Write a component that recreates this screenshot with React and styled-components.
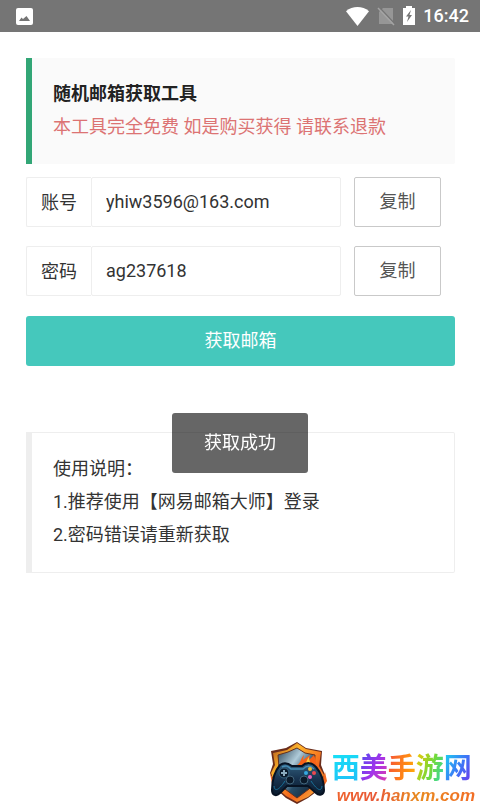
import React, { useState } from "react";
import styled, { createGlobalStyle } from "styled-components";

const GlobalStyle = createGlobalStyle`
  * { box-sizing: border-box; }
  body {
    margin: 0;
    background: #fff;
    color: #333;
    font: 18px/33px Roboto, "Noto Sans CJK SC", sans-serif;
  }
  button, input { font: inherit; }
`;

const Page = styled.div`
  position: relative;
  min-height: 100vh;
  display: flex;
  flex-direction: column;
`;

const StatusBar = styled.header`
  height: 32px;
  padding: 0 11px 0 16px;
  display: flex;
  align-items: center;
  justify-content: space-between;
  background: #757575;
  color: #fff;
`;

const StatusIcons = styled.div`
  display: flex;
  align-items: center;
  gap: 8px;
`;

const Clock = styled.time`
  font-weight: 500;
  line-height: 32px;
`;

const Content = styled.main`
  flex: 1;
  padding: 26px 25px 0 26px;
`;

const Intro = styled.section`
  margin-bottom: 13px;
  padding: 19px 20px 21px 21px;
  border-left: 6px solid #32a676;
  border-radius: 0 2px 2px 0;
  background: #fafafa;
`;

const Title = styled.h1`
  margin: 0;
  color: #222;
  font-size: 18px;
  font-weight: 700;
`;

const Warning = styled.p`
  margin: 0;
  color: #dc7373;
`;

const Form = styled.form`
  display: flex;
  flex-direction: column;
  gap: 20px;
`;

const FieldRow = styled.div`
  display: flex;
  height: 50px;
  padding-right: 14px;
`;

const Fields = styled.div`
  display: flex;
  flex-direction: column;
  gap: 19px;
`;

const FieldLabel = styled.label`
  width: 65px;
  display: flex;
  align-items: center;
  justify-content: center;
  border: 1px solid #eee;
  border-right: 0;
  border-radius: 2px 0 0 2px;
`;

const FieldInput = styled.input`
  flex: 1;
  min-width: 0;
  margin-right: 13px;
  padding: 0 14px 2px;
  border: 1px solid #eee;
  border-radius: 2px;
  background: #fff;
  color: #333;
  outline: 0;
`;

const CopyButton = styled.button`
  width: 87px;
  padding: 0 0 2px;
  border: 1px solid #c9c9c9;
  border-radius: 2px;
  background: #fff;
  color: #555;
`;

const SubmitButton = styled.button`
  height: 50px;
  padding: 0 0 2px;
  border: 0;
  border-radius: 3px;
  background: #45c8bc;
  color: #fff;
`;

const Notes = styled.section`
  margin-top: 66px;
  padding: 19px 20px 21px 21px;
  border: 1px solid #eee;
  border-left: 6px solid #eee;
  border-radius: 0 2px 2px 0;
`;

const NoteLine = styled.p`
  margin: 0;
`;

const Toast = styled.div`
  position: fixed;
  top: 413px;
  left: 50%;
  transform: translateX(-50%);
  width: 136px;
  height: 60px;
  border-radius: 3px;
  background: rgba(0, 0, 0, 0.6);
  color: #fff;
  line-height: 60px;
  text-align: center;
`;

const Watermark = styled.a`
  position: fixed;
  right: 5px;
  bottom: 0;
  display: flex;
  align-items: flex-end;
  gap: 5px;
  text-decoration: none;
`;

const Brand = styled.span`
  display: flex;
  flex-direction: column;
`;

const BrandName = styled.span`
  display: flex;
  font-size: 28px;
  font-weight: 700;
  line-height: 38px;
`;

const Glyph = styled.span`
  background: ${(p) => p.$fill};
  background-clip: text;
  -webkit-background-clip: text;
  color: transparent;
`;

const BrandUrl = styled.span`
  padding-left: 5px;
  font: italic 700 17px/16px "Liberation Sans", sans-serif;
  background: linear-gradient(90deg, #f0642c, #e85a38 30%, #e88a20 60%, #f26d25);
  background-clip: text;
  -webkit-background-clip: text;
  color: transparent;
`;

const brandGlyphs = [
  ["西", "linear-gradient(160deg, #15e4f6, #22b8f8)"],
  ["美", "linear-gradient(120deg, #4b4cf0, #a134ea 50%, #ee3fa0)"],
  ["手", "linear-gradient(100deg, #f4503c, #ff8a12 60%, #ffb60a)"],
  ["游", "linear-gradient(110deg, #ffc400, #75d935 50%, #21d7c3)"],
  ["网", "linear-gradient(120deg, #18dcf0, #3b79f7 50%, #7a2ae8)"],
];

const PictureIcon = () => (
  <svg width="17" height="17" viewBox="0 0 17 17" aria-hidden="true">
    <rect width="17" height="17" rx="2" fill="#fff" />
    <path d="M3 13l2.500-3.500 1.500 1.500L10.500 8l3.500 5z" fill="#757575" />
  </svg>
);

const WifiIcon = () => (
  <svg width="23" height="19" viewBox="0 0 23 19" aria-hidden="true">
    <path d="M0 4.2C6.5-1.3 16.5-1.3 23 4.2L11.5 19z" fill="#fff" />
  </svg>
);

const NoSimIcon = () => (
  <svg width="18" height="19" viewBox="0 0 18 19" aria-hidden="true">
    <path d="M6 1h10v16H2V5z" fill="#969696" />
    <path d="M2 0l16 17" stroke="#757575" strokeWidth="1.5" />
    <path d="M1 1l16 17" stroke="#a4a4a4" strokeWidth="1.5" />
  </svg>
);

const BatteryIcon = () => (
  <svg width="12" height="20" viewBox="0 0 12 20" aria-hidden="true">
    <path d="M3 0h6v2h3v17H0V2h3z" fill="#fff" />
    <path d="M8 4L3 10.500h2.500L4 16l5-7H6.500z" fill="#757575" />
  </svg>
);

const GamepadShield = () => (
  <svg width="58" height="63" viewBox="0 0 58 63" aria-hidden="true">
    <defs>
      <linearGradient id="rim" x1="0" y1="0" x2="1" y2="1">
        <stop offset="0" stopColor="#a84c18" />
        <stop offset=".3" stopColor="#ffb52c" />
        <stop offset=".65" stopColor="#f3621b" />
        <stop offset="1" stopColor="#ffd34b" />
      </linearGradient>
      <linearGradient id="steel" x1="0" y1="0" x2="1" y2="1">
        <stop offset="0" stopColor="#284153" />
        <stop offset=".35" stopColor="#afcbd9" />
        <stop offset=".6" stopColor="#284d67" />
        <stop offset="1" stopColor="#111c2d" />
      </linearGradient>
      <linearGradient id="pad" x1="0" y1="0" x2="0" y2="1">
        <stop offset="0" stopColor="#315f7d" />
        <stop offset=".5" stopColor="#18334f" />
        <stop offset="1" stopColor="#091a2c" />
      </linearGradient>
    </defs>
    <path d="M28 1l9 6 16 3-1 14 4 10-5 14-12 9-11 6-11-6-10-9-6-16 3-9-2-13 15-3z" fill="#6a2c1b" />
    <path d="M28 2l9 6 15 3-2 14 5 9-5 13-11 9-11 5-11-6-9-8-6-15 4-8-2-12 14-3z" fill="url(#rim)" />
    <path d="M28 7l8 5 10 2-2 25-4 9-12 9-12-9-5-9-2-25 10-3z" fill="url(#steel)" stroke="#63301f" />
    <path d="M25 25c7-1 6-7 10-11l-1 5 7-5-1 5 5-5c3 7 1 11 5 16l-4 5H30z" fill="#f66218" />
    <path d="M32 25c6-1 5-6 8-9 0 7 4 6 4 12H34z" fill="#ffc842" />
    <path d="M1 32l4 8-1 8zM56 31l-3 9 2 5 3-5z" fill="#f36a20" />
    <path d="M11 24c4-3 8-2 12 1h10c4-4 10-4 14 1 6 7 8 16 8 23 0 5-5 6-8 3l-8-7H18l-7 7c-4 4-8 2-8-3 0-9 2-18 8-25z" fill="url(#pad)" stroke="#071323" strokeWidth="2" />
    <path d="M13 26c4-2 6-1 9 2h12c4-4 8-3 11 0" fill="none" stroke="#478fb7" strokeWidth="1.500" />
    <path d="M5 45c1 8 7 1 11-5M53 45c-1 8-7 1-11-5" fill="none" stroke="#19739c" />
    <circle cx="15" cy="32" r="5" fill="#0b1a2a" stroke="#36627e" />
    <path d="M15 29v6M12 32h6" stroke="#8cabbd" strokeWidth="2" />
    <circle cx="21" cy="39" r="4" fill="#0b1a2a" stroke="#42657b" />
    <circle cx="35" cy="39" r="4" fill="#0b1a2a" stroke="#42657b" />
    <circle cx="41" cy="28" r="2" fill="#f3be37" />
    <circle cx="37" cy="32" r="2" fill="#34a8e0" />
    <circle cx="45" cy="32" r="2" fill="#ed4950" />
    <circle cx="41" cy="36" r="2" fill="#eb5fb6" />
  </svg>
);

function CopyField({ id, label, value }) {
  const [text, setText] = useState(value);
  return (
    <FieldRow>
      <FieldLabel htmlFor={id}>{label}</FieldLabel>
      <FieldInput id={id} value={text} onChange={(e) => setText(e.target.value)} />
      <CopyButton type="button" onClick={() => navigator.clipboard?.writeText(text)}>
        复制
      </CopyButton>
    </FieldRow>
  );
}

export default function App() {
  return (
    <Page lang="zh-CN">
      <GlobalStyle />
      <StatusBar>
        <PictureIcon />
        <StatusIcons>
          <WifiIcon />
          <NoSimIcon />
          <BatteryIcon />
          <Clock>16:42</Clock>
        </StatusIcons>
      </StatusBar>
      <Content>
        <Intro>
          <Title>随机邮箱获取工具</Title>
          <Warning>本工具完全免费 如是购买获得 请联系退款</Warning>
        </Intro>
        <Form onSubmit={(e) => e.preventDefault()}>
          <Fields>
            <CopyField id="account" label="账号" value="yhiw3596@163.com" />
            <CopyField id="password" label="密码" value="ag237618" />
          </Fields>
          <SubmitButton type="submit">获取邮箱</SubmitButton>
        </Form>
        <Notes>
          <NoteLine>使用说明：</NoteLine>
          <NoteLine>1.推荐使用【网易邮箱大师】登录</NoteLine>
          <NoteLine>2.密码错误请重新获取</NoteLine>
        </Notes>
      </Content>
      <Toast role="status">获取成功</Toast>
      <Watermark href="#">
        <GamepadShield />
        <Brand>
          <BrandName>
            {brandGlyphs.map(([char, fill]) => (
              <Glyph key={char} $fill={fill}>{char}</Glyph>
            ))}
          </BrandName>
          <BrandUrl>www.hanxm.com</BrandUrl>
        </Brand>
      </Watermark>
    </Page>
  );
}
